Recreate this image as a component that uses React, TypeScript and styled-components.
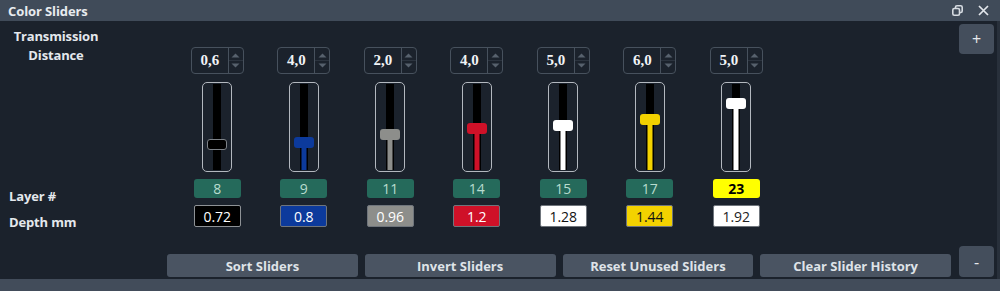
import styled, { createGlobalStyle } from "styled-components";

const GlobalStyle = createGlobalStyle`
  html, body {
    margin: 0;
    padding: 0;
    background: #1b222c;
  }
  * {
    box-sizing: border-box;
  }
`;

type SliderData = {
  step: string;
  layer: number;
  depth: string;
  color: string;
  text: string;
  thumbTop: number;
  highlight?: boolean;
};

const sliders: SliderData[] = [
  { step: "0,6", layer: 8, depth: "0.72", color: "#000000", text: "#ffffff", thumbTop: 56 },
  { step: "4,0", layer: 9, depth: "0.8", color: "#0c3a9c", text: "#ffffff", thumbTop: 54 },
  { step: "2,0", layer: 11, depth: "0.96", color: "#8d8e8b", text: "#ffffff", thumbTop: 46 },
  { step: "4,0", layer: 14, depth: "1.2", color: "#cf1128", text: "#ffffff", thumbTop: 40 },
  { step: "5,0", layer: 15, depth: "1.28", color: "#ffffff", text: "#111111", thumbTop: 37 },
  { step: "6,0", layer: 17, depth: "1.44", color: "#f3d200", text: "#111111", thumbTop: 31 },
  { step: "5,0", layer: 23, depth: "1.92", color: "#ffffff", text: "#222222", thumbTop: 15, highlight: true },
];

const buttons = ["Sort Sliders", "Invert Sliders", "Reset Unused Sliders", "Clear Slider History"];

export default function App() {
  return (
    <>
      <GlobalStyle />
      <Window>
        <TitleBar>
          <Title>Color Sliders</Title>
          <TitleIcons>
            <svg width="11" height="11" viewBox="0 0 11 11" fill="none" stroke="#d6dbe1" strokeWidth="1.6">
              <rect x="3.5" y="0.8" width="6.7" height="6.7" rx="1.5" />
              <rect x="0.8" y="3.5" width="6.7" height="6.7" rx="1.5" fill="#404b59" />
            </svg>
            <svg width="11" height="11" viewBox="0 0 11 11" stroke="#e2e6eb" strokeWidth="1.7">
              <path d="M1 1 L10 10 M10 1 L1 10" />
            </svg>
          </TitleIcons>
        </TitleBar>
        <Main>
          <LabelColumn>
            <Heading>
              Transmission
              <br />
              Distance
            </Heading>
            <RowLabel $top={122}>Layer #</RowLabel>
            <RowLabel $top={7}>Depth mm</RowLabel>
          </LabelColumn>
          <Center>
            <SliderRow>
              {sliders.map((s, i) => (
                <SliderColumn key={i}>
                  <Spin>
                    <SpinValue>{s.step}</SpinValue>
                    <SpinArrows>
                      <Arrow>
                        <svg width="9" height="5" viewBox="0 0 9 5">
                          <path d="M0.5 4.5 L4.5 0.5 L8.5 4.5 Z" fill="#57616d" />
                        </svg>
                      </Arrow>
                      <Arrow $bottom>
                        <svg width="9" height="5" viewBox="0 0 9 5">
                          <path d="M0.5 0.5 L4.5 4.5 L8.5 0.5 Z" fill="#57616d" />
                        </svg>
                      </Arrow>
                    </SpinArrows>
                  </Spin>
                  <SliderBox>
                    <Track />
                    <Fill $color={s.color} style={{ top: s.thumbTop + 4 }} />
                    <Thumb $color={s.color} $dark={s.color === "#000000"} style={{ top: s.thumbTop }} />
                  </SliderBox>
                  <LayerTag $highlight={s.highlight}>{s.layer}</LayerTag>
                  <DepthBox $bg={s.color} $text={s.text}>
                    {s.depth}
                  </DepthBox>
                </SliderColumn>
              ))}
            </SliderRow>
            <ButtonRow>
              {buttons.map((b) => (
                <ActionButton key={b}>{b}</ActionButton>
              ))}
            </ButtonRow>
          </Center>
          <SideColumn>
            <SquareButton $height={30}>+</SquareButton>
            <SquareButton $height={31}>-</SquareButton>
          </SideColumn>
        </Main>
        <StatusStrip />
      </Window>
    </>
  );
}

const Window = styled.div`
  width: 1000px;
  height: 291px;
  display: flex;
  flex-direction: column;
  background: #1b222c;
  font-family: "Open Sans", "Noto Sans", sans-serif;
  color: #e4e8ed;
  overflow: hidden;
`;

const TitleBar = styled.div`
  height: 21px;
  flex: none;
  display: flex;
  align-items: center;
  justify-content: space-between;
  padding: 0 11px 0 8px;
  background: #404b59;
`;

const Title = styled.div`
  font-size: 13px;
  font-weight: 700;
  color: #e8ebef;
  letter-spacing: -0.1px;
`;

const TitleIcons = styled.div`
  display: flex;
  align-items: center;
  gap: 15px;
`;

const Main = styled.div`
  flex: 1;
  display: flex;
  border-right: 3px solid #28303b;
`;

const LabelColumn = styled.div`
  width: 167px;
  flex: none;
  display: flex;
  flex-direction: column;
  padding-top: 6px;
`;

const Heading = styled.div`
  width: 112px;
  text-align: center;
  font-size: 13px;
  font-weight: 700;
  line-height: 19px;
  letter-spacing: -0.15px;
`;

const RowLabel = styled.div<{ $top: number }>`
  margin-top: ${(p) => p.$top}px;
  padding-left: 9px;
  font-size: 13px;
  font-weight: 700;
  line-height: 19px;
  letter-spacing: -0.15px;
`;

const Center = styled.div`
  width: 784px;
  flex: none;
  display: flex;
  flex-direction: column;
  padding-bottom: 2px;
`;

const SliderRow = styled.div`
  display: flex;
  padding: 26px 0 0 7px;
`;

const SliderColumn = styled.div`
  width: 86.5px;
  display: flex;
  flex-direction: column;
  align-items: center;
`;

const Spin = styled.div`
  width: 53px;
  height: 27px;
  display: flex;
  border: 1px solid #47515d;
  border-radius: 4px;
`;

const SpinValue = styled.div`
  flex: 1;
  display: flex;
  align-items: center;
  justify-content: center;
  font-family: "Liberation Serif", serif;
  font-weight: 700;
  font-size: 15px;
  color: #f1f3f6;
`;

const SpinArrows = styled.div`
  width: 15px;
  display: flex;
  flex-direction: column;
  border-left: 1px solid #47515d;
`;

const Arrow = styled.div<{ $bottom?: boolean }>`
  flex: 1;
  display: flex;
  justify-content: center;
  align-items: ${(p) => (p.$bottom ? "flex-start" : "flex-end")};
  padding: ${(p) => (p.$bottom ? "2px 0 0" : "0 0 2px")};
  border-top: ${(p) => (p.$bottom ? "1px solid #2c343f" : "none")};
`;

const SliderBox = styled.div`
  position: relative;
  width: 30px;
  height: 90px;
  margin-top: 8px;
  border: 1.5px solid #b3b8bf;
  border-radius: 5px;
`;

const Track = styled.div`
  position: absolute;
  left: 50%;
  top: 1px;
  bottom: 1px;
  width: 8px;
  transform: translateX(-50%);
  background: #000;
`;

const Fill = styled.div<{ $color: string }>`
  position: absolute;
  left: 50%;
  bottom: 1px;
  width: 5px;
  transform: translateX(-50%);
  background: ${(p) => p.$color};
`;

const Thumb = styled.div<{ $color: string; $dark: boolean }>`
  position: absolute;
  left: 50%;
  width: 20px;
  height: 11px;
  transform: translateX(-50%);
  border-radius: 3px;
  background: ${(p) => p.$color};
  border: ${(p) => (p.$dark ? "1px solid #7d8288" : "none")};
`;

const LayerTag = styled.div<{ $highlight?: boolean }>`
  width: 47px;
  height: 19px;
  margin-top: 7px;
  border-radius: 3px;
  display: flex;
  align-items: center;
  justify-content: center;
  font-size: 14px;
  font-weight: ${(p) => (p.$highlight ? 700 : 400)};
  background: ${(p) => (p.$highlight ? "#ffff00" : "#256a5b")};
  color: ${(p) => (p.$highlight ? "#000" : "#b8dccf")};
`;

const DepthBox = styled.div<{ $bg: string; $text: string }>`
  width: 47px;
  height: 22px;
  margin-top: 7px;
  border-radius: 2px;
  display: flex;
  align-items: center;
  justify-content: center;
  font-size: 14px;
  background: ${(p) => p.$bg};
  color: ${(p) => p.$text};
  border: 1px solid ${(p) => (p.$bg === "#000000" ? "#8e9296" : "#6f757c")};
`;

const ButtonRow = styled.div`
  margin-top: auto;
  display: flex;
  gap: 7px;
`;

const ActionButton = styled.div`
  flex: 1;
  height: 23px;
  border-radius: 3px;
  background: #4a5462;
  display: flex;
  align-items: center;
  justify-content: center;
  font-size: 13px;
  font-weight: 700;
  color: #dfe3e8;
`;

const SideColumn = styled.div`
  flex: 1;
  display: flex;
  flex-direction: column;
  justify-content: space-between;
  align-items: flex-start;
  padding: 3px 0 2px 8px;
`;

const SquareButton = styled.div<{ $height: number }>`
  width: 35px;
  height: ${(p) => p.$height}px;
  border-radius: 4px;
  background: #444e5c;
  display: flex;
  align-items: center;
  justify-content: center;
  font-size: 16px;
  font-weight: 400;
  color: #e6e9ed;
`;

const StatusStrip = styled.div`
  height: 12px;
  flex: none;
  background: #424c5a;
`;
